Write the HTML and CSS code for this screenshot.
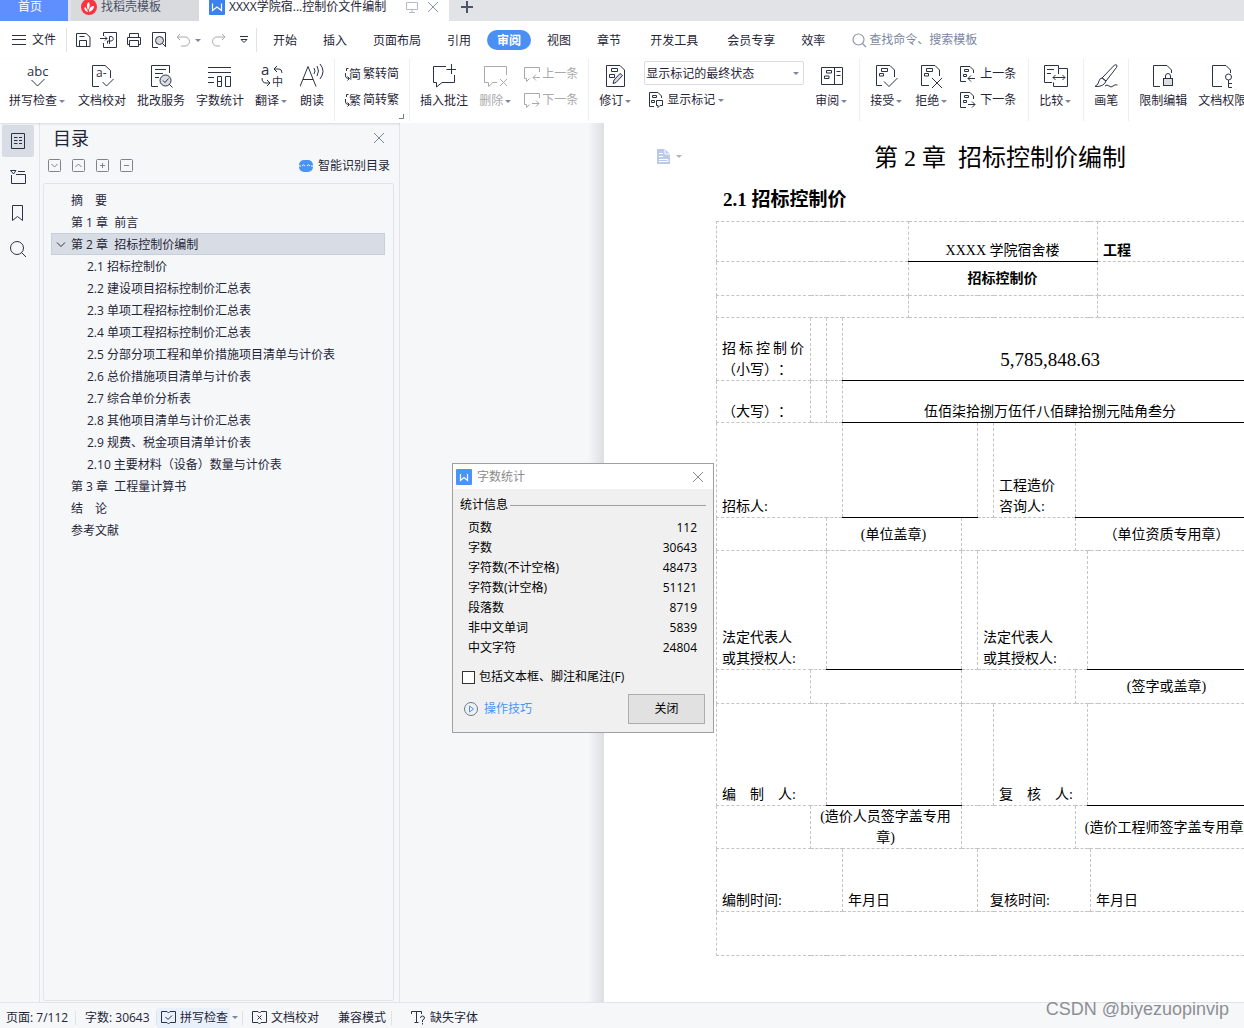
FILE: index.html
```html
<!DOCTYPE html>
<html lang="zh-CN">
<head>
<meta charset="utf-8">
<title>XXXX学院宿...控制价文件编制</title>
<link rel="stylesheet" href="styles.css">
</head>
<body>
<header>
  <nav class="tabs" aria-label="文档标签">
    <a class="tab tab-home" href="#">首页</a>
    <a class="tab tab-store" href="#">
      <svg width="16" height="16" viewBox="0 0 16 16"><circle cx="8" cy="8" r="8" fill="#f9333f"/><path d="M7 13C3 12 3 9 4 8C5 9 6 10 7 13ZM7 11C5 7 6 4 8 3C9 6 9 8 7 11ZM8 13C8 9 10 7 13 7C13 10 11 12 8 13Z" fill="#fff"/></svg>
      找稻壳模板</a>
    <div class="tab tab-doc">
      <svg width="16" height="16" viewBox="0 0 16 16"><rect width="16" height="16" rx="1" fill="#3b82f0"/><path d="M3.500 4.500V11.500L8 8L12.500 11.500V4.500" fill="none" stroke="#fff" stroke-width="1.200"/></svg>
      <span class="doc-name">XXXX学院宿...控制价文件编制</span>
      <svg width="12" height="12" viewBox="0 0 12 12" fill="none" stroke="#b3bacb"><path d="M.5 1.500H11.500V8.500H.5ZM6 8.500V11M3 11.500H9"/></svg>
      <button class="plain tab-close" aria-label="关闭标签"><svg width="12" height="12" viewBox="0 0 12 12" stroke="#8a94ab"><path d="M1 1L11 11M11 1L1 11"/></svg></button>
    </div>
    <button class="plain tab-add" aria-label="新建"><svg width="12" height="12" viewBox="0 0 12 12" stroke="#4a546b" stroke-width="2"><path d="M6 0V12M0 6H12"/></svg></button>
  </nav>

  <div class="menu">
    <button class="plain file"><svg width="14" height="10" viewBox="0 0 14 10" stroke="#2b3245"><path d="M0 .5H14M0 4.500H14M0 9.500H14"/></svg>文件</button>
    <div class="quick">
      <button class="plain" aria-label="保存"><svg class="ic" width="16" height="16" viewBox="0 0 16 16"><path d="M1.500 1.500H11L15 5V14.500H1.500ZM4.500 14V8.500H11.500V14M4.500 4.500H9.500"/></svg></button>
      <button class="plain" aria-label="输出为PDF"><svg class="ic" width="17" height="16" viewBox="0 0 17 16"><path d="M3.500 4V.5H16.500V15.500H3.500V11M0 6.500H7M5 4.500L7 6.500L5 8.500M9.500 12V4.500H11C14 4.500 14 9 11 9H7.500V11.500"/></svg></button>
      <button class="plain" aria-label="打印"><svg class="ic" width="16" height="16" viewBox="0 0 16 16"><path d="M3.500 5V1.500H12.500V5M3.500 12.500H1.500V5.500H14.500V12.500H12.500M3.500 8.500H12.500V14.500H3.500Z"/></svg></button>
      <button class="plain" aria-label="打印预览"><svg class="ic" width="16" height="16" viewBox="0 0 16 16"><path d="M7 15.500H1.500V.5H14.500V15M11.500 11.500L15 15"/><circle cx="8.500" cy="8.500" r="4" fill="#d5d8df"/></svg></button>
      <button class="plain undo" aria-label="撤销"><svg class="ic dim" width="14" height="14" viewBox="0 0 14 14"><path d="M4 1L1 4L4 7M1 4H9A4.500 4.500 0 0 1 9 13H5"/></svg><i class="arrow"></i></button>
      <button class="plain" aria-label="恢复"><svg class="ic dim" width="14" height="14" viewBox="0 0 14 14"><path d="M10 1L13 4L10 7M13 4H5A4.500 4.500 0 0 0 5 13H8"/></svg></button>
      <button class="plain" aria-label="更多"><svg class="ic" width="8" height="8" viewBox="0 0 8 8"><path d="M0 .5H8M1 3.500L4 6.500L7 3.500Z"/></svg></button>
    </div>
    <nav class="menu-tabs" aria-label="功能区">
      <a href="#">开始</a><a href="#">插入</a><a href="#">页面布局</a><a href="#">引用</a><a class="current" href="#">审阅</a><a href="#">视图</a><a href="#">章节</a><a class="dev" href="#">开发工具</a><a href="#">会员专享</a><a href="#">效率</a>
    </nav>
    <label class="search"><svg width="15" height="15" viewBox="0 0 15 15" fill="none" stroke="#8d97ad" stroke-width="1.200"><circle cx="6.500" cy="6.500" r="5.500"/><path d="M10.500 10.500L14 14"/></svg><input type="text" placeholder="查找命令、搜索模板" aria-label="查找命令"></label>
  </div>

  <div class="ribbon">
    <div class="group first">
      <button class="big"><svg class="ic" width="24" height="24" viewBox="0 0 24 24"><text class="glyph" x="1" y="12" font-size="13">abc</text><path d="M5.500 16L11.500 22L18.500 15"/></svg><span>拼写检查<i class="arrow"></i></span></button>
      <button class="big"><svg class="ic" width="24" height="24" viewBox="0 0 24 24"><path d="M9 22.500H2.500V1.500H15L20.500 6.500V14M12.500 18L16.500 22L23.500 15"/><text class="glyph" x="6" y="13" font-size="12">a-</text></svg><span>文档校对</span></button>
      <button class="big"><svg class="ic" width="24" height="24" viewBox="0 0 24 24"><path d="M9 22.500H2.500V1.500H20.500V9M6 5.500H17M6 9.500H14M6 13.500H10M20 20L23.500 23.500"/><circle cx="16.500" cy="16.500" r="5.500" fill="#d9dce2"/><path d="M14 16.500L16 18.500L19.500 14.500"/></svg><span>批改服务</span></button>
      <button class="big"><svg class="ic" width="24" height="24" viewBox="0 0 24 24"><path d="M0 3.500H23M0 8.500H23M0 13.500H6M0 18.500H6M9.500 12.500H13.500V22.500H9.500ZM9.500 17.500H13.500M17.500 12.500H22.500V22.500H17.500Z"/></svg><span>字数统计</span></button>
      <button class="big"><svg class="ic" width="24" height="24" viewBox="0 0 24 24"><text class="glyph" x="1" y="11" font-size="15">a</text><text class="glyph" x="12" y="22" font-size="11">中</text><path d="M17 2L14 5L17 8M14 5H19Q22 5 22 9M2 14Q2 19 6 19H10M7 16L10 19L7 22"/></svg><span>翻译<i class="arrow"></i></span></button>
      <button class="big"><svg class="ic" width="24" height="24" viewBox="0 0 24 24"><path d="M0 22.500L8 2.500L16 22.500M3 15.500H13M14 4Q16 7 14 10M17 2Q20 7 17 12M20 0Q26 7 20 15"/></svg><span>朗读</span></button>
    </div>
    <div class="group">
      <div class="pair">
        <button class="small"><svg class="ic" width="16" height="16" viewBox="0 0 16 16"><text class="glyph" x="4" y="13" font-size="12">简</text><path d="M3.500 2.500H1.500V5M.5 7V10Q.5 12.500 4 12.500M2.500 10.500L4.500 12.500L2.500 14.500"/></svg>繁转简</button>
        <button class="small"><svg class="ic" width="16" height="16" viewBox="0 0 16 16"><text class="glyph" x="4" y="13" font-size="12">繁</text><path d="M3.500 2.500H1.500V5M.5 7V10Q.5 12.500 4 12.500M2.500 10.500L4.500 12.500L2.500 14.500"/></svg>简转繁</button>
      </div>
      <svg class="launcher" width="5" height="5" viewBox="0 0 5 5" fill="none" stroke="#6f7a92"><path d="M4.500 0V4.500H0"/></svg>
    </div>
    <div class="group">
      <button class="big"><svg class="ic" width="24" height="24" viewBox="0 0 24 24"><path d="M14 2.500H1.500V18.500H4.500V23L10 18.500H22.500V11M19.500 0V10M14.500 5.500H24"/></svg><span>插入批注</span></button>
      <button class="big" disabled><svg class="ic dim" width="24" height="24" viewBox="0 0 24 24"><path d="M22.500 11V2.500H.5V18.500H4.500V22.500L9 18.500H13M16 15L23 22M23 15L16 22"/></svg><span>删除<i class="arrow"></i></span></button>
      <div class="pair">
        <button class="small" disabled><svg class="ic dim" width="16" height="16" viewBox="0 0 16 16"><path d="M15.500 6V1.500H.5V12.500H2.500V15.500L5.500 12.500M16 11.500H9M12 8.500L9 11.500L12 14.500"/></svg>上一条</button>
        <button class="small" disabled><svg class="ic dim" width="16" height="16" viewBox="0 0 16 16"><path d="M15.500 6V1.500H.5V12.500H2.500V15.500L5.500 12.500M8 11.500H15M12 8.500L15 11.500L12 14.500"/></svg>下一条</button>
      </div>
    </div>
    <div class="group">
      <button class="big"><svg class="ic" width="24" height="24" viewBox="0 0 24 24"><path d="M20.500 6V22.500H2.500V1.500H16L20.500 6M7.500 4.500H13.500V7.500H7.500ZM5.500 10.500H10.500V13.500H5.500Z"/><path d="M9 19.500L10 16L16 9.500L18.500 11.500L12 18.500Z" fill="#d9dce2"/></svg><span>修订<i class="arrow"></i></span></button>
      <div class="pair markup">
        <div class="picker"><select aria-label="显示状态"><option>显示标记的最终状态</option></select><i class="arrow"></i></div>
        <button class="small inset"><svg class="ic" width="16" height="16" viewBox="0 0 16 16"><path d="M6 14.500H1.500V.5H10L13.500 4V6M4.500 3.500H8.500V5.500H4.500ZM3.500 8.500H6.500V10.500H3.500ZM8.500 8.500H14.500V13.500H12L10 15.500V13.500H8.500Z"/></svg>显示标记<i class="arrow"></i></button>
      </div>
      <button class="big"><svg class="ic" width="24" height="24" viewBox="0 0 24 24"><path d="M1.500 3.500H22.500V20.500H1.500ZM14.500 3.500V20.500M16.500 7.500H20.500M16.500 11.500H20.500M6.500 6.500H11.500V9H6.500ZM4.500 12H9V14.500H4.500Z"/></svg><span>审阅<i class="arrow"></i></span></button>
    </div>
    <div class="group">
      <button class="big"><svg class="ic" width="24" height="24" viewBox="0 0 24 24"><path d="M7 21.500H1.500V1.500H15L19.500 6V13M6.500 4.500H12.500V7.500H6.500ZM4.500 9.500H8.500V12H4.500ZM9 17.500L14 22.500L22.500 14"/></svg><span>接受<i class="arrow"></i></span></button>
      <button class="big"><svg class="ic" width="24" height="24" viewBox="0 0 24 24"><path d="M9 21.500H1.500V1.500H15L19.500 6V12M6.500 4.500H12.500V7.500H6.500ZM4.500 9.500H8.500V12H4.500ZM12 14L22 24M22 14L12 24"/></svg><span>拒绝<i class="arrow"></i></span></button>
      <div class="pair roomy">
        <button class="small"><svg class="ic" width="16" height="16" viewBox="0 0 16 16"><path d="M6 15.500H.5V.5H10L13.500 4V7M4.500 3.500H8.500V5.500H4.500ZM3.500 8.500H6.500V10.500H3.500ZM15 12.500H8M11 9.500L8 12.500L11 15.500"/></svg>上一条</button>
        <button class="small"><svg class="ic" width="16" height="16" viewBox="0 0 16 16"><path d="M6 15.500H.5V.5H10L13.500 4V7M4.500 3.500H8.500V5.500H4.500ZM3.500 8.500H6.500V10.500H3.500ZM8 12.500H15M12 9.500L15 12.500L12 15.500"/></svg>下一条</button>
      </div>
    </div>
    <div class="group">
      <button class="big"><svg class="ic" width="24" height="24" viewBox="0 0 24 24"><path d="M8 18.500H.5V1.500H14.500V4.500H23.500V22.500H9.500V18.500M14.500 4.500V10M3 5.500H10M3 9.500H7M9 13.500H21M11.500 11L9 13.500L11.500 16M18.500 11L21 13.500L18.500 16"/></svg><span>比较<i class="arrow"></i></span></button>
    </div>
    <div class="group">
      <button class="big"><svg class="ic" width="24" height="24" viewBox="0 0 24 24"><path d="M8 14L20.500 1Q24 0 22.500 3.500L12 17ZM8 14L12 17Q10 23 1 22.500Q5 20 5 17Q6 14 8 14ZM11 22Q13 20 15 22T19 22T23.500 21"/></svg><span>画笔</span></button>
    </div>
    <div class="group last">
      <button class="big"><svg class="ic" width="24" height="24" viewBox="0 0 24 24"><path d="M9 22.500H2.500V1.500H16L20.500 6V9M14.500 14.500V12Q14.500 9.500 17 9.500T19.500 12V14.500"/><rect x="12.500" y="14.500" width="9" height="7" fill="#dcdee3"/></svg><span>限制编辑</span></button>
      <button class="big"><svg class="ic" width="24" height="24" viewBox="0 0 24 24"><path d="M12 22.500H2.500V1.500H16L20.500 6V9M18.500 16V23.500H22M18.500 19.500H22"/><circle cx="18.500" cy="13" r="3"/></svg><span>文档权限</span></button>
    </div>
  </div>
</header>

<main>
  <nav class="rail" aria-label="导航窗格">
    <button class="plain active" aria-label="目录"><svg class="ic" width="16" height="16" viewBox="0 0 16 16"><path d="M1.500.5H14.500V15.500H1.500ZM4 4.500H7.500M4 7.500H7.500M4 10.500H7.500M9 4.500H12M9 7.500H12M9 10.500H12"/></svg></button>
    <button class="plain" aria-label="章节"><svg class="ic" width="16" height="16" viewBox="0 0 16 16"><path d="M.5 1.500H6L3.500 5ZM8 2.500H15M1.500 6V14.500H15.500V5.500H6"/></svg></button>
    <button class="plain" aria-label="书签"><svg class="ic" width="16" height="16" viewBox="0 0 16 16"><path d="M2.500.5H12.500V15.500L7.500 11.500L2.500 15.500Z"/></svg></button>
    <button class="plain" aria-label="查找"><svg class="ic" width="16" height="16" viewBox="0 0 16 16"><circle cx="7" cy="7" r="6.500"/><path d="M11.500 11.500L16 16"/></svg></button>
  </nav>

  <aside class="outline">
    <div class="outline-head">
      <h2>目录</h2>
      <button class="plain" aria-label="关闭目录"><svg width="10" height="10" viewBox="0 0 10 10" stroke="#7b86a0"><path d="M0 0L10 10M10 0L0 10"/></svg></button>
    </div>
    <div class="outline-tools">
      <button class="plain" aria-label="展开"><svg class="box" width="13" height="13" viewBox="0 0 13 13"><rect x=".5" y=".5" width="12" height="12" rx="1"/><path d="M3.500 5L6.500 8L9.500 5"/></svg></button>
      <button class="plain" aria-label="收起"><svg class="box" width="13" height="13" viewBox="0 0 13 13"><rect x=".5" y=".5" width="12" height="12" rx="1"/><path d="M3.500 8L6.500 5L9.500 8"/></svg></button>
      <button class="plain" aria-label="增加级别"><svg class="box" width="13" height="13" viewBox="0 0 13 13"><rect x=".5" y=".5" width="12" height="12" rx="1"/><path d="M4 6.500H9M6.500 4V9"/></svg></button>
      <button class="plain" aria-label="减少级别"><svg class="box" width="13" height="13" viewBox="0 0 13 13"><rect x=".5" y=".5" width="12" height="12" rx="1"/><path d="M4 6.500H9"/></svg></button>
      <button class="plain smart"><svg width="14" height="12" viewBox="0 0 14 12"><rect width="14" height="12" rx="5" fill="#4a94f7"/><path d="M0 6H2M12 6H14M3 6Q4.500 3.500 6 6M8 6Q9.500 3.500 11 6" fill="none" stroke="#fff"/></svg>智能识别目录</button>
    </div>
    <ul class="tree">
      <li><a href="#">摘　要</a></li>
      <li><a href="#">第 1 章&nbsp; 前言</a></li>
      <li><a class="selected" href="#"><svg class="ic" width="10" height="6" viewBox="0 0 10 6"><path d="M1 .5L5 4.500L9 .5"/></svg>第 2 章&nbsp; 招标控制价编制</a>
        <ul>
          <li><a href="#">2.1 招标控制价</a></li>
          <li><a href="#">2.2 建设项目招标控制价汇总表</a></li>
          <li><a href="#">2.3 单项工程招标控制价汇总表</a></li>
          <li><a href="#">2.4 单项工程招标控制价汇总表</a></li>
          <li><a href="#">2.5 分部分项工程和单价措施项目清单与计价表</a></li>
          <li><a href="#">2.6 总价措施项目清单与计价表</a></li>
          <li><a href="#">2.7 综合单价分析表</a></li>
          <li><a href="#">2.8 其他项目清单与计价汇总表</a></li>
          <li><a href="#">2.9 规费、税金项目清单计价表</a></li>
          <li><a href="#">2.10 主要材料（设备）数量与计价表</a></li>
        </ul>
      </li>
      <li><a href="#">第 3 章&nbsp; 工程量计算书</a></li>
      <li><a href="#">结　论</a></li>
      <li><a href="#">参考文献</a></li>
    </ul>
  </aside>

  <section class="workspace">
    <div class="canvas">
      <article class="paper">
        <button class="plain section-mark" aria-label="章节选项"><svg width="13" height="15" viewBox="0 0 13 15"><path d="M0 0H8L13 5V15H0Z" fill="#b9cbe8"/><path d="M8 0V5H13M2 4.500H6M2 7.500H6M2 10.500H11V12.500H2" fill="none" stroke="#fff"/></svg><i class="arrow"></i></button>
        <h1>第 2 章&nbsp; 招标控制价编制</h1>
        <h3>2.1 招标控制价</h3>
        <table>
          <colgroup><col class="w94"><col class="w16"><col class="w16"><col class="w66"><col class="w53"><col class="w16"><col class="w16"><col class="w82"><col class="w12"><col class="w3"><col class="w7"><col class="w161"></colgroup>
          <tbody>
          <tr class="h40"><td colspan="4"></td><td colspan="7" class="line mid">XXXX 学院宿舍楼</td><td class="strong">工程</td></tr>
          <tr class="h34"><td colspan="4"></td><td colspan="7" class="strong center">招标控制价</td><td></td></tr>
          <tr class="h22"><td colspan="4"></td><td colspan="7"></td><td></td></tr>
          <tr class="h63"><td><span class="spread">招标控制价</span>（小写）：</td><td></td><td></td><td colspan="9" class="line center amount">5,785,848.63</td></tr>
          <tr class="h42"><td>（大写）：</td><td></td><td></td><td colspan="9" class="line mid">伍佰柒拾捌万伍仟八佰肆拾捌元陆角叁分</td></tr>
          <tr class="h95"><td colspan="3">招标人:</td><td colspan="3" class="line"></td><td></td><td>工程造价<br>咨询人:</td><td colspan="4" class="line"></td></tr>
          <tr class="h33"><td colspan="2"></td><td colspan="3" class="center">(单位盖章)</td><td colspan="3"></td><td colspan="4" class="center">（单位资质专用章）</td></tr>
          <tr class="h119"><td colspan="2">法定代表人<br>或其授权人:</td><td colspan="3" class="line"></td><td></td><td colspan="3">法定代表人<br>或其授权人:</td><td colspan="3" class="line"></td></tr>
          <tr class="h34"><td></td><td colspan="4"></td><td colspan="3"></td><td colspan="4" class="center">(签字或盖章)</td></tr>
          <tr class="h102"><td colspan="2">编　制　人:</td><td colspan="3" class="line"></td><td colspan="2"></td><td colspan="2">复　核　人:</td><td colspan="3" class="line"></td></tr>
          <tr class="h43"><td></td><td colspan="4" class="center">(造价人员签字盖专用章)</td><td colspan="3"></td><td colspan="4" class="center">(造价工程师签字盖专用章)</td></tr>
          <tr class="h63"><td colspan="3">编制时间:</td><td colspan="3">年月日</td><td colspan="4" class="indent">复核时间:</td><td colspan="2">年月日</td></tr>
          <tr class="h44"><td colspan="12"></td></tr>
          </tbody>
        </table>
      </article>
    </div>

    <div class="dialog" role="dialog" aria-labelledby="count-title">
      <div class="dialog-title">
        <svg width="16" height="16" viewBox="0 0 16 16"><rect width="16" height="16" rx="1" fill="#4a94f7"/><path d="M4.500 5V11.500L8 8.500L11.500 11.500V5" fill="none" stroke="#fff" stroke-width="1.200"/></svg>
        <span id="count-title">字数统计</span>
        <button class="plain" aria-label="关闭对话框"><svg width="12" height="12" viewBox="0 0 12 12" stroke="#8a8a8a"><path d="M1 1L11 11M11 1L1 11"/></svg></button>
      </div>
      <div class="dialog-body">
        <div class="caption">统计信息</div>
        <dl>
          <div><dt>页数</dt><dd>112</dd></div>
          <div><dt>字数</dt><dd>30643</dd></div>
          <div><dt>字符数(不计空格)</dt><dd>48473</dd></div>
          <div><dt>字符数(计空格)</dt><dd>51121</dd></div>
          <div><dt>段落数</dt><dd>8719</dd></div>
          <div><dt>非中文单词</dt><dd>5839</dd></div>
          <div><dt>中文字符</dt><dd>24804</dd></div>
        </dl>
        <label class="check"><input type="checkbox">包括文本框、脚注和尾注(F)</label>
        <div class="dialog-foot">
          <a href="#"><svg width="14" height="14" viewBox="0 0 14 14" fill="none"><circle cx="7" cy="7" r="6.500" stroke="#6b7890"/><path d="M5.500 4V10L9.500 7Z" stroke="#4a94f7"/></svg>操作技巧</a>
          <button class="close">关闭</button>
        </div>
      </div>
    </div>
  </section>
</main>

<footer class="status">
  <span class="cell page">页面: 7/112</span>
  <span class="cell count">字数: 30643</span>
  <span class="cell spell"><button class="plain lit"><svg class="ic" width="15" height="15" viewBox="0 0 15 15"><path d="M6 1.500H.5V12.500H6L7.500 14L9 12.500H14.500V1.500H9L7.500 3L6 1.500M4.500 7L7 9.500L11 5.500"/></svg>拼写检查</button><i class="arrow"></i></span>
  <button class="plain"><svg class="ic" width="15" height="15" viewBox="0 0 15 15"><path d="M6 1.500H.5V12.500H6L7.500 14L9 12.500H14.500V1.500H9L7.500 3L6 1.500M5.500 5.500L9.500 9.500M9.500 5.500L5.500 9.500"/></svg>文档校对</button>
  <span class="cell compat">兼容模式</span>
  <button class="plain"><svg class="ic" width="15" height="15" viewBox="0 0 15 15"><path d="M.5 4V1.500H10.500V4M5.500 1.500V12.500M3.500 12.500H7.500M9.500 8Q9.500 6 11.500 6T13.500 8Q13.500 9 11.500 10V12M11.500 13V14.500"/></svg>缺失字体</button>
  <span class="watermark">CSDN @biyezuopinvip</span>
</footer>
</body>
</html>
```
FILE: styles.css
```css
* { box-sizing: border-box; }

body {
  margin: 0;
  height: 100vh;
  display: flex;
  flex-direction: column;
  overflow: hidden;
  background: #f5f7f9;
  color: #1f2638;
  font: 12px/16px "Open Sans", "Noto Sans CJK SC", sans-serif;
}

a { color: inherit; text-decoration: none; }
button, input, select { font: inherit; color: inherit; }
svg { display: block; flex: none; }
ul, dl, dd, h1, h2, h3 { margin: 0; padding: 0; list-style: none; }

.plain, .big, .small {
  display: flex;
  align-items: center;
  border: 0;
  padding: 0;
  background: none;
  white-space: nowrap;
}

.ic { fill: none; stroke: #2b3245; }
.ic.dim { stroke: #a9a9ab; }
.glyph { fill: #2b3245; stroke: none; }
.box { fill: none; stroke: #7d828c; }

.arrow {
  flex: none;
  border: 3px solid transparent;
  border-top-color: #7b86a0;
  border-bottom: 0;
}

/* Document tabs */
.tabs { display: flex; height: 21px; line-height: 13px; background: #e1e3e6; }
.tab { display: flex; align-items: center; padding-bottom: 8px; white-space: nowrap; }
.tab-home { width: 68px; padding-left: 18px; background: #5f8fff; color: #fff; }
.tab-store { width: 128px; margin-left: 3px; padding-left: 10px; gap: 4px; background: #d9dade; color: #4a5164; }
.tab-doc { width: 250px; padding-left: 10px; gap: 4px; background: #fff; }
.doc-name { flex: 1; }
.tab-close { margin: 0 10px 0 5px; }
.tab-add { margin-left: 12px; padding-bottom: 8px; }

/* Menu row */
.menu { display: flex; align-items: center; height: 38px; background: #fff; white-space: nowrap; }
.file { gap: 6px; margin-left: 12px; }
.quick {
  display: flex;
  align-items: center;
  gap: 9px;
  height: 24px;
  margin-left: 10px;
  padding: 0 8px;
  border: solid #dfe2e7;
  border-width: 0 1px;
}
.undo { gap: 5px; margin-right: 2px; }
.quick .plain:last-child { margin: 0 0 0 5px; }
.menu-tabs { display: flex; align-items: center; gap: 6px; margin-left: 6px; }
.menu-tabs a { padding: 3px 10px 1px; border-radius: 10px; }
.menu-tabs .current { background: #4a90f4; color: #fff; font-weight: 700; }
.menu-tabs .dev { margin: 0 3px; }
.search { display: flex; align-items: center; flex: 1; gap: 2px; margin-left: 17px; }
.search input { flex: 1; min-width: 0; border: 0; padding: 0; outline: 0; }
.search input::placeholder { color: #7b86a0; opacity: 1; }

/* Ribbon */
.ribbon {
  display: flex;
  height: 64px;
  padding-bottom: 2px;
  background: #fff;
  position: relative;
  box-shadow: 0 1px 2px #0000001f;
  overflow-x: clip;
}
.group { display: flex; flex: none; gap: 11px; padding: 0 10px; border-right: 1px solid #eceef1; position: relative; }
.group.first { padding-left: 9px; }
.group.last { border: 0; }
.big { flex-direction: column; gap: 5px; padding-top: 5px; }
.big span { display: flex; align-items: center; gap: 2px; }
.big:has(.arrow) span { padding-right: 2px; }
.pair { display: flex; flex-direction: column; gap: 2px; padding-top: 2px; }
.small { gap: 2px; height: 24px; padding-top: 2px; }
.roomy { width: 58px; }
.roomy .small { gap: 4px; }
.inset { gap: 3px; padding-left: 4px; }
button:disabled { color: #a9a9ab; }
.launcher { position: absolute; right: 5px; bottom: 2px; }
.picker { display: flex; align-items: center; width: 160px; height: 24px; padding-right: 4px; border: 1px solid #d9dce2; border-radius: 2px; }
.picker select { flex: 1; appearance: none; border: 0; padding: 1px 1px 0; background: none; outline: 0; }

/* Side panes */
main { display: flex; flex: 1; min-height: 0; }
.rail { display: flex; flex-direction: column; gap: 4px; width: 40px; padding: 2px; border-right: 1px solid #e1e4e9; }
.rail .plain { justify-content: center; width: 32px; height: 32px; border-radius: 2px; }
.rail .active { background: #d8dde5; }
.outline { display: flex; flex-direction: column; width: 360px; padding: 0 5px 1px 3px; border-right: 1px solid #e1e4e9; }
.outline-head { display: flex; align-items: center; justify-content: space-between; height: 30px; padding: 0 10px; }
.outline-head h2 { font-size: 18px; line-height: 24px; font-weight: 400; }
.outline-tools { display: flex; align-items: center; gap: 11px; height: 24px; margin-bottom: 6px; padding: 0 4px 0 5px; }
.smart { gap: 5px; margin-left: auto; padding-top: 1px; }
.tree { flex: 1; border: 1px solid #e1e4e9; border-radius: 2px; padding: 5px 8px 0 7px; }
.tree ul { padding: 0; }
.tree a { display: flex; align-items: center; height: 22px; padding: 2px 0 0 20px; white-space: nowrap; }
.tree ul a { padding-left: 36px; }
.tree .selected { gap: 5px; padding-left: 5px; background: #d8dde5; outline: 1px solid #c5d0dd; outline-offset: -1px; }

/* Page */
.workspace { position: relative; flex: 1; min-width: 0; }
.canvas { height: 100%; overflow: hidden; padding-left: 204px; background: linear-gradient(90deg, #f5f7f9 188px, #dcdee1 204px); }
.paper {
  position: relative;
  width: 794px;
  min-height: 100%;
  padding: 19px 140px 40px 112px;
  background: #fff;
  color: #000;
  font: 14px/21px "Liberation Serif", "Noto Sans CJK SC", serif;
  text-spacing-trim: space-all;
}
.section-mark { position: absolute; left: 53px; top: 26px; gap: 6px; }
.section-mark .arrow { border-top-color: #b3b3b3; }
.paper h1 { width: 568px; font-size: 24px; line-height: 32px; font-weight: 400; text-align: center; }
.paper h3 { padding: 13px 0 8px 7px; font-size: 19px; line-height: 26px; font-weight: 700; }

table { width: 543px; table-layout: fixed; border-collapse: collapse; }
td { padding: 0 6px 0 5px; border: 1px dashed #c4c4c4; vertical-align: bottom; }
td.line { border-bottom: 1px solid #000; }
td.mid { text-align: center; }
td.center { text-align: center; vertical-align: middle; }
td.strong { font-weight: 700; }
td.amount { padding-top: 20px; font-size: 19px; }
td.indent { padding-left: 12px; }
.spread { display: block; text-align-last: justify; }
.w3 { width: 3px; } .w7 { width: 7px; } .w12 { width: 12px; } .w16 { width: 16px; }
.w53 { width: 53px; } .w66 { width: 66px; } .w82 { width: 82px; } .w94 { width: 94px; } .w161 { width: 161px; }
.h22 { height: 22px; } .h33 { height: 33px; } .h34 { height: 34px; } .h40 { height: 40px; }
.h42 { height: 42px; } .h43 { height: 43px; } .h44 { height: 44px; } .h63 { height: 63px; }
.h95 { height: 95px; } .h102 { height: 102px; } .h119 { height: 119px; }

/* Word count window */
.dialog { position: absolute; left: 52px; top: 340px; width: 262px; border: 1px solid #a0a0a0; background: #f0f0f0; color: #000; }
.dialog-title { display: flex; align-items: center; gap: 5px; height: 25px; padding: 0 9px 0 3px; background: #fff; color: #8c8c8c; }
.dialog-title .plain { margin-left: auto; }
.dialog-body { padding: 8px 7px; }
.caption { display: flex; align-items: center; gap: 2px; margin-bottom: 5px; }
.caption::after { content: ""; flex: 1; height: 1px; background: #a0a0a0; }
dl div { display: flex; justify-content: space-between; padding: 0 9px 0 8px; line-height: 20px; }
.check { display: flex; align-items: center; gap: 4px; margin: 11px 0 9px 2px; }
.check input { appearance: none; width: 13px; height: 13px; margin: 0; border: 1px solid #333; background: #fff; }
.dialog-foot { display: flex; align-items: center; justify-content: space-between; padding: 0 1px 0 4px; }
.dialog-foot a { display: flex; align-items: center; gap: 6px; color: #4a94f7; }
.close { width: 77px; height: 30px; border: 1px solid #adadad; background: #e1e1e1; }

/* Status bar */
.status { position: relative; display: flex; align-items: center; height: 26px; padding: 4px 0 0 6px; border-top: 1px solid #e1e4e9; background: #f5f7f9; white-space: nowrap; }
.status .plain { gap: 4px; }
.cell { display: flex; align-items: center; height: 14px; border-right: 1px solid #dfe2e7; }
.page { width: 70px; }
.count { width: 81px; padding-left: 9px; }
.spell { gap: 2px; width: 86px; margin-right: 9px; }
.lit { height: 20px; padding: 0 2px 0 4px; background: #e8f0fb; }
.compat { width: 54px; margin: 0 19px; }
.watermark { position: absolute; right: 15px; top: -6px; color: #8d8f94; font: 18px/24px "Liberation Sans", sans-serif; }
```
